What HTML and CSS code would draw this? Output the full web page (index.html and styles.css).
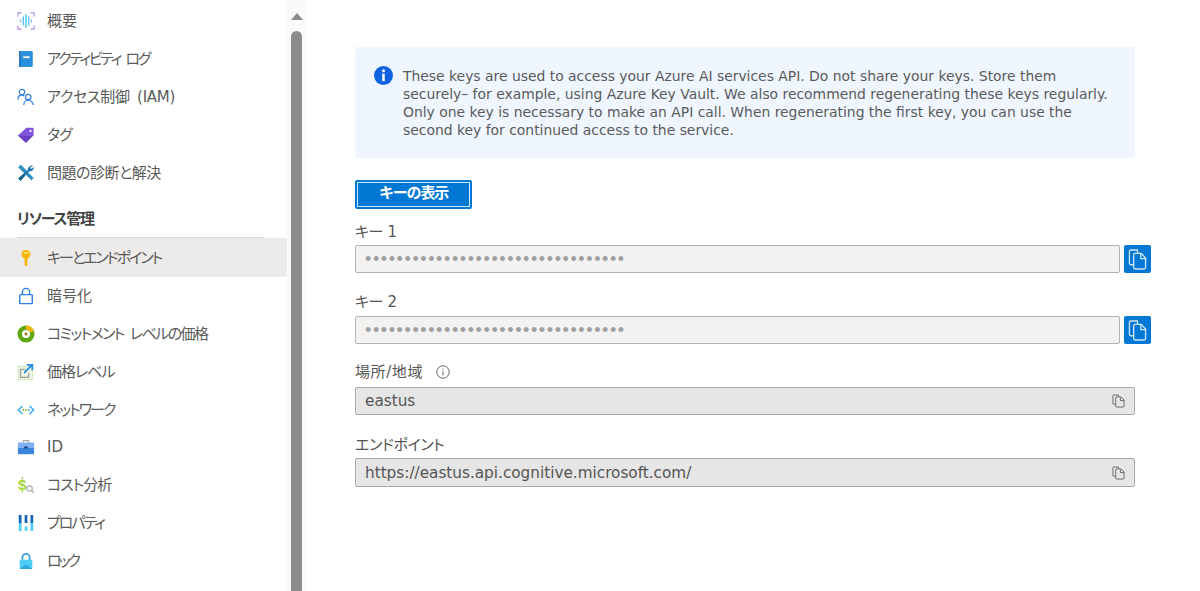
FILE: index.html
```html
<!DOCTYPE html>
<html lang="ja">
<head>
<meta charset="utf-8">
<title>キーとエンドポイント</title>
<link rel="stylesheet" href="styles.css">
</head>
<body>
<div class="app">
  <nav class="nav">
    <a class="row"><svg class="ico" viewBox="0 0 20 20"><path d="M1 5V1h4M15 1h4v4M1 15v4h4M15 19h4v-4" fill="none" stroke="#a98ae6" stroke-width="1.2"/><path d="M4 8v4M16 8v4" stroke="#8fc4f2" stroke-width="1.4"/><path d="M7 5v10M13 5v10" stroke="#5fb6f0" stroke-width="1.4"/><path d="M10 2.500v15" stroke="#35c6f2" stroke-width="1.5"/></svg><span>概要</span></a>
    <a class="row tight24"><svg class="ico" viewBox="0 0 20 20"><rect x="2.500" y="1" width="15" height="18" rx="1.500" fill="#2a8fdd"/><rect x="2.500" y="1" width="1.500" height="18" fill="#1a6fb8"/><rect x="7" y="7" width="7" height="2" fill="#fff"/></svg><span>アクティビティ ログ</span></a>
    <a class="row tight03"><svg class="ico" viewBox="0 0 20 20" fill="none" stroke="#2f7fe0" stroke-width="1.300"><circle cx="5.500" cy="4.500" r="3"/><path d="M1 13c0-3 2-5 4.500-5 1 0 2 .3 2.600 1"/><circle cx="12.500" cy="10" r="3"/><path d="M7.500 19c0-3 2-5.500 5-5.500s5.500 2.500 5.500 5.500"/></svg><span>アクセス制御 (IAM)</span></a>
    <a class="row tight1"><svg class="ico" viewBox="0 0 20 20"><path d="M1 10.500 10.500 2h6.500c1 0 1.500.5 1.500 1.500V10L10 18.500z" fill="#8257dc"/><path d="M1 10.500 10 18.500l8.500-8.500-4 1z" fill="#6a3fc0"/><circle cx="15" cy="5.500" r="1.300" fill="#e8defa"/></svg><span>タグ</span></a>
    <a class="row tight0"><svg class="ico" viewBox="0 0 20 20"><path d="M3 1.500l2 0 13.500 14-2.500 2.500L1.500 4z" fill="#2f8fbf"/><path d="M18 2a4.500 4.500 0 0 0-6 4.500L1.500 16l2.500 2.500L13.500 8a4.500 4.500 0 0 0 5.500-5L16.500 5.500 14.500 4z" fill="#1c76ad"/><path d="M1.500 16 7 11l2 2-5 5.500z" fill="#0f5f92"/></svg><span>問題の診断と解決</span></a>
    <div class="head"><h2>リソース管理</h2></div>
    <a class="row sel tight2"><svg class="ico" viewBox="0 0 20 20"><path d="M10 1c3 0 5 2 5 4.500S13 10 11.500 10.500V19H10l-1.500-1.500V10.500C7 10 5 8.500 5 5.500S7 1 10 1z" fill="#f7b500"/><path d="M7 4.500h6" stroke="#fde38a" stroke-width="1.500"/></svg><span>キーとエンドポイント</span></a>
    <a class="row"><svg class="ico" viewBox="0 0 20 20" fill="none" stroke="#2f7fe8" stroke-width="1.600"><rect x="3" y="8.500" width="14" height="10" rx="1"/><path d="M6 8.500V5.500a4 4 0 0 1 8 0v3"/></svg><span>暗号化</span></a>
    <a class="row tight15"><svg class="ico" viewBox="0 0 20 20"><circle cx="10" cy="10" r="7" fill="#fff" stroke="#5ea80d" stroke-width="5"/><path d="M10 .5a9.500 9.500 0 0 1 9 6.500l-5 1a4 4 0 0 0-4-3z" fill="#f2b90c"/><circle cx="10" cy="10" r="1.700" fill="#9a7a10"/></svg><span>コミットメント レベルの価格</span></a>
    <a class="row tight1"><svg class="ico" viewBox="0 0 20 20"><rect x="1.500" y="3.500" width="16" height="15" fill="#eef7e2" stroke="#a5d57a" stroke-dasharray="1 1"/><path d="M4 7h5M4 7v9h9v-5" fill="none" stroke="#9a9a9a" stroke-width="1.300"/><path d="M8 11l8-8M11 2h6v6" fill="none" stroke="#1f8fe8" stroke-width="2"/></svg><span>価格レベル</span></a>
    <a class="row tight2"><svg class="ico" viewBox="0 0 20 20"><path d="M6 5.500 1.500 10 6 14.500" fill="none" stroke="#35a9ef" stroke-width="1.600"/><path d="M14 5.500 18.500 10 14 14.500" fill="none" stroke="#35a9ef" stroke-width="1.600"/><circle cx="7" cy="10" r="1" fill="#7dbb2a"/><circle cx="10" cy="10" r="1" fill="#7dbb2a"/><circle cx="13" cy="10" r="1" fill="#35a9ef"/></svg><span>ネットワーク</span></a>
    <a class="row"><svg class="ico" viewBox="0 0 20 20"><path d="M7 5V3h6v2" fill="none" stroke="#a9a9a9" stroke-width="1.300"/><rect x="1" y="5" width="18" height="6" fill="#7db0f0"/><rect x="1" y="11" width="18" height="7" fill="#3a84dc"/><rect x="8" y="9.500" width="4" height="2" fill="#0f3f80"/></svg><span>ID</span></a>
    <a class="row tight1"><svg class="ico" viewBox="0 0 20 20"><circle cx="14" cy="14" r="3" fill="#fff" stroke="#a8a8a8" stroke-width="1.200"/><path d="M16 16l3 3" stroke="#a8a8a8" stroke-width="1.300"/><text class="dollar" x="1" y="15">$</text><path d="M6 1v2M6 16v2" stroke="#a4d83a" stroke-width="1.500"/></svg><span>コスト分析</span></a>
    <a class="row tight2"><svg class="ico" viewBox="0 0 20 20"><path d="M3.500 1v9M10 1v9M16.500 1v9" stroke="#1464b4" stroke-width="3"/><path d="M3.500 10v9M10 14v5M16.500 10v9" stroke="#4fcdf2" stroke-width="3"/></svg><span>プロパティ</span></a>
    <a class="row tight3"><svg class="ico" viewBox="0 0 20 20"><path d="M6 9V6a4 4 0 0 1 8 0v3" fill="none" stroke="#3fa0e4" stroke-width="2"/><rect x="3" y="8.500" width="14" height="10.500" rx="1" fill="#4fcdf2"/><path d="M3 19l7-5 7 5z" fill="#2aa7e0"/></svg><span>ロック</span></a>
  </nav>
  <div class="bar"><div class="arrow"></div><div class="thumb"></div></div>
  <main class="main">
    <section class="note">
      <svg class="note-ico" viewBox="0 0 20 20"><circle cx="10" cy="10" r="10" fill="#0f62e0"/><rect x="8.700" y="8" width="2.600" height="8" fill="#fff"/><circle cx="10" cy="5" r="1.600" fill="#fff"/></svg>
      <p>These keys are used to access your Azure AI services API. Do not share your keys. Store them securely– for example, using Azure Key Vault. We also recommend regenerating these keys regularly. Only one key is necessary to make an API call. When regenerating the first key, you can use the second key for continued access to the service.</p>
    </section>
    <button class="show"><span>キーの表示</span></button>
    <label class="lab l1">キー 1</label>
    <div class="keyrow">
      <div class="inp key">•••••••••••••••••••••••••••••••••</div>
      <button class="copy"><svg viewBox="0 0 20 22" fill="none" stroke="#cfe6fa" stroke-width="1.400"><path d="M10 4.500V1H3a1.500 1.500 0 0 0-1.500 1.500V15c0 1 .5 1.500 1.500 1.500h3"/><path d="M7.500 4.500H14l4.500 5V19.500c0 1-.5 1.500-1.500 1.500H7.500C6.500 21 6 20.500 6 19.500V6c0-1 .5-1.500 1.500-1.500z"/><path d="M13.500 5v5h5"/></svg></button>
    </div>
    <label class="lab l2">キー 2</label>
    <div class="keyrow">
      <div class="inp key">•••••••••••••••••••••••••••••••••</div>
      <button class="copy"><svg viewBox="0 0 20 22" fill="none" stroke="#cfe6fa" stroke-width="1.400"><path d="M10 4.500V1H3a1.500 1.500 0 0 0-1.500 1.500V15c0 1 .5 1.500 1.500 1.500h3"/><path d="M7.500 4.500H14l4.500 5V19.500c0 1-.5 1.500-1.500 1.500H7.500C6.500 21 6 20.500 6 19.500V6c0-1 .5-1.500 1.500-1.500z"/><path d="M13.500 5v5h5"/></svg></button>
    </div>
    <label class="lab l3">場所/地域 <svg class="info" viewBox="0 0 14 14" fill="none" stroke="#666"><circle cx="7" cy="7" r="6.200"/><path d="M7 6v4.500M7 3.500v1.200"/></svg></label>
    <div class="inp ro"><span>eastus</span><svg class="ro-copy" viewBox="0 0 14 15" fill="none" stroke="#666" stroke-width="1"><path d="M7 3V1H2a1 1 0 0 0-1 1v8a1 1 0 0 0 1 1h2"/><path d="M5 3h4.500l3.500 3.500V13a1 1 0 0 1-1 1H5a1 1 0 0 1-1-1V4a1 1 0 0 1 1-1z"/><path d="M9 3.500v3.500h3.500"/></svg></div>
    <label class="lab l4">エンドポイント</label>
    <div class="inp ro"><span>https://eastus.api.cognitive.microsoft.com/</span><svg class="ro-copy" viewBox="0 0 14 15" fill="none" stroke="#666" stroke-width="1"><path d="M7 3V1H2a1 1 0 0 0-1 1v8a1 1 0 0 0 1 1h2"/><path d="M5 3h4.500l3.500 3.500V13a1 1 0 0 1-1 1H5a1 1 0 0 1-1-1V4a1 1 0 0 1 1-1z"/><path d="M9 3.500v3.500h3.500"/></svg></div>
  </main>
</div>
</body>
</html>
```
FILE: styles.css
```css
* { box-sizing: border-box; }
html, body { margin: 0; height: 591px; overflow: hidden; background: #fff; }
body { font-family: "DejaVu Sans", "Noto Sans CJK JP", sans-serif; color: #555; font-size: 14px; font-feature-settings: "palt"; }
.app { display: flex; height: 591px; }
.nav { width: 287px; flex: none; padding-top: 2px; display: flex; flex-direction: column; }
.row { display: flex; align-items: center; height: 37.9px; flex: none; padding-left: 17px; gap: 12px; color: #5a5a5a; font-size: 15px; line-height: 20px; white-space: pre; }
.row span { word-spacing: 3px; }
.head ~ .row { padding-top: 2px; }
.tight03 span { letter-spacing: -.3px; }
.tight0 span { letter-spacing: -.5px; }
.tight1 span { letter-spacing: -1px; }
.tight15 span { letter-spacing: -1.600px; }
.tight2 span { letter-spacing: -2px; }
.tight24 span { letter-spacing: -2.300px; }
.tight3 span { letter-spacing: -3px; }
.row.sel { background: #edebe9; height: 39px; margin-bottom: -1px; }
.ico { width: 18px; height: 18px; flex: none; }
.dollar { font: bold 17px "Liberation Sans", sans-serif; fill: #a4d83a; }
.head { height: 46.5px; flex: none; margin: 0 23px 0 17px; border-bottom: 1px solid #d8d8d8; display: flex; align-items: flex-start; padding-top: 18px; }
.head h2 { margin: 0; font-size: 15px; line-height: 20px; font-weight: 700; color: #444; letter-spacing: -1.300px; }
.bar { width: 18px; flex: none; background: #fafafa; display: flex; flex-direction: column; align-items: center; padding-left: 1px; }
.arrow { margin-top: 13px; border: 6.500px solid transparent; border-top: 0; border-bottom: 7px solid #8a8a8a; }
.thumb { margin-top: 11px; width: 11px; flex: 1; background: #8c8c8c; border-radius: 6px 6px 0 0; }
.main { width: 780px; margin-left: 50px; padding-top: 47px; display: flex; flex-direction: column; flex: none; }
.note { height: 111px; background: #eff6ff; border-radius: 2px; display: flex; padding: 19px 20px 0 19px; gap: 10px; flex: none; }
.note-ico { width: 19px; height: 19px; flex: none; }
.note p { margin: 1px 0 0; font-size: 13.900px; line-height: 18px; color: #5a5a5a; }
.show { margin-top: 22px; width: 117px; height: 29px; flex: none; padding: 0 0 3px; background: #0078d4; border: 2px solid #0078d4; outline: 1px solid #cfe6fa; outline-offset: -3px; border-radius: 2px; color: #fff; font: 700 15px/20px "DejaVu Sans", "Noto Sans CJK JP", sans-serif; letter-spacing: -1.200px; }
.lab { display: flex; align-items: center; gap: 4px; height: 20px; font-size: 15px; line-height: 20px; color: #555; white-space: pre; flex: none; letter-spacing: -.4px; }
.l1 { margin-top: 13px; margin-bottom: 3px; }
.l2 { margin-top: 19px; margin-bottom: 4px; }
.l3 { margin-top: 18px; margin-bottom: 5px; gap: 8px; letter-spacing: .6px; }
.l4 { margin-top: 20px; margin-bottom: 3px; }
.info { width: 14px; height: 14px; }
.keyrow { display: flex; gap: 4px; width: 796px; flex: none; height: 28px; }
.inp { height: 28px; border: 1px solid #b4b2b0; border-radius: 2px; display: flex; align-items: center; flex: none; }
.key { width: 765px; background: #f3f2f1; color: #a0a0a0; font-family: "Liberation Sans", sans-serif; font-size: 18px; letter-spacing: 1.600px; padding-left: 9px; }
.ro { width: 780px; background: #e6e6e6; color: #555; font-size: 15.250px; padding: 0 9px; justify-content: space-between; border-color: #a8a8a8; }
.ro + .lab + .ro { height: 29px; }
.ro-copy { width: 13px; height: 14px; }
.copy { width: 27px; height: 28px; padding: 0; background: #0078d4; border: 0; border-radius: 2px; display: flex; align-items: center; justify-content: center; }
.copy svg { width: 19px; height: 21px; }
```
